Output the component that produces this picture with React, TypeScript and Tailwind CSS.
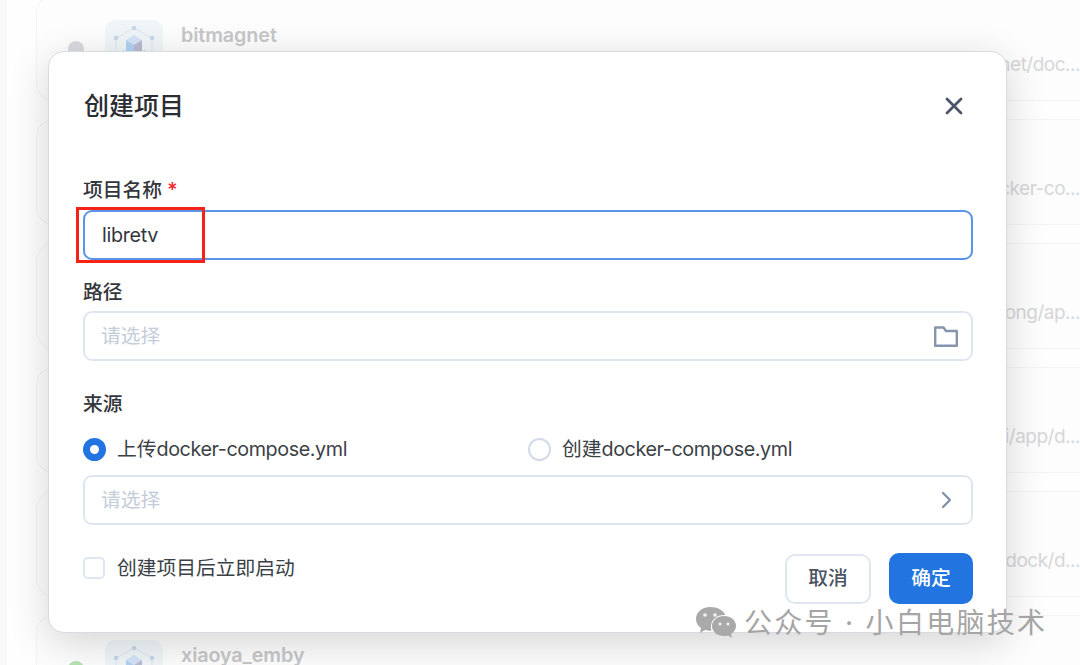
const cjk = "font-['Inter','Noto_Sans_CJK_SC',sans-serif]";

function Cube() {
  return (
    <div className="w-[58px] h-[58px] rounded-[10px] bg-[#f0f6f8] flex items-center justify-center shrink-0">
      <svg width="46" height="46" viewBox="0 0 46 46" fill="none">
        <path d="M23 2 L41 12 V33 L23 44 L5 33 V12 Z" stroke="#dbe4ee" strokeWidth="1" />
        <circle cx="23" cy="2" r="2.200" fill="#c6d7ea" />
        <circle cx="41" cy="12" r="2.200" fill="#c6d7ea" />
        <circle cx="5" cy="12" r="2.200" fill="#c6d7ea" />
        <path d="M23 9 L31 14 L23 19 L15 14 Z" fill="#d3e3f8" />
        <path d="M15 14 L23 19 V31 L15 26 Z" fill="#b3d0f2" />
        <path d="M31 14 L23 19 V31 L31 26 Z" fill="#b8bbd2" />
        <path d="M12 24 L23 31 L34 24 M12 24 V32 L23 38 L34 32 V24" stroke="#d5dce8" strokeWidth="1" />
      </svg>
    </div>
  );
}

const rows = [
  { name: "bitmagnet", path: "net/doc...", dot: "bg-[#d9dae0]" },
  { name: "", path: "cker-co...", dot: "bg-[#d9dae0]" },
  { name: "", path: "ong/ap...", dot: "bg-[#d9dae0]" },
  { name: "", path: "ei/app/d...", dot: "bg-[#d9dae0]" },
  { name: "", path: "dock/d...", dot: "bg-[#d9dae0]" },
  { name: "xiaoya_emby", path: "", dot: "bg-[#b5e3b0]" },
];

function Background() {
  return (
    <div className="pl-[36px] -mt-[5px] flex flex-col gap-[18px]">
      {rows.map((r, i) => (
        <div
          key={i}
          className="h-[106px] shrink-0 rounded-l-[18px] border border-r-0 border-[#f3f4f6] bg-[#fdfdfd] flex items-start"
        >
          <div className={`w-[16px] h-[16px] rounded-full shrink-0 ml-[31px] mt-[45px] ${r.dot}`} />
          <div className="ml-[21px] mt-[24px]">
            <Cube />
          </div>
          <div className="ml-[18px] mt-[26px] text-[19.75px] leading-[26px] font-semibold tracking-[-0.1px] text-[#c6c7c9]">{r.name}</div>
          <div className="ml-auto mt-[56px] text-[19px] leading-[26px] tracking-[-0.5px] text-[#d6d7da] whitespace-nowrap">{r.path}</div>
        </div>
      ))}
    </div>
  );
}

function Radio({ checked, prefix }: { checked?: boolean; prefix: string }) {
  return (
    <div className="flex items-center">
      {checked ? (
        <div className="w-[23px] h-[23px] rounded-full bg-[#2274e0] flex items-center justify-center">
          <div className="w-[9px] h-[9px] rounded-full bg-white" />
        </div>
      ) : (
        <div className="w-[23px] h-[23px] rounded-full border-2 border-[#d3dbe8] bg-white" />
      )}
      <span className="ml-[11px] text-[19.75px] leading-[26px] text-[#3b3f46]">
        {prefix}
        <span className="tracking-[-0.42px]">docker-compose.yml</span>
      </span>
    </div>
  );
}

function Field({ placeholder, icon, mt }: { placeholder: string; icon: React.ReactNode; mt: string }) {
  return (
    <div className={`h-[50px] rounded-[9px] border-2 border-[#dfe6f0] flex items-center pl-[16px] pr-[13px] ${mt}`}>
      <span className="text-[19.75px] leading-[26px] text-[#c3ccd9]">{placeholder}</span>
      <span className="ml-auto flex items-center">{icon}</span>
    </div>
  );
}

function Wechat() {
  return (
    <svg width="42" height="34" viewBox="0 0 42 34" fill="#a9a9a9">
      <path d="M15 1C7 1 1 6 1 13c0 4 2 7 5 9l-1 5 5-3c2 .6 3.500 .8 5 .8h1.500C16 23 16 22 16 20.500 16 13.500 22 9 29 9h1.200C28.500 4.500 22.500 1 15 1z" />
      <path d="M41 20c0-6-5.500-10-12-10s-12 4-12 10 5.500 10 12 10c1.300 0 2.800-.2 4-.6l4 2.600-1-4c3-2 5-4.500 5-8z" />
      <circle cx="10" cy="9" r="1.800" fill="#f2f2f2" />
      <circle cx="20" cy="9" r="1.800" fill="#f2f2f2" />
      <circle cx="25" cy="18" r="1.500" fill="#f2f2f2" />
      <circle cx="33" cy="18" r="1.500" fill="#f2f2f2" />
    </svg>
  );
}

export default function App() {
  return (
    <div className={`relative w-[1080px] h-[665px] overflow-hidden bg-[#fefefe] ${cjk}`}>
      <div className="absolute left-0 top-0 w-[7px] h-full bg-[#f8f9fb]" />
      <Background />

      <div className="absolute left-[48px] top-[51px] w-[959px] h-[582px] rounded-[16px] border border-[#d9dbdf] bg-white shadow-[0_10px_40px_rgba(0,0,0,0.16)] pl-[34px] pr-[33px]">
        <div className="flex items-center justify-between pt-[36px] h-[72px]">
          <h1 className="ml-[1px] text-[25px] leading-[36px] font-medium text-[#2a2d32]">创建项目</h1>
          <svg width="18" height="18" viewBox="0 0 18 18" className="mr-[10px]" fill="none" stroke="#4b5568" strokeWidth="2.800" strokeLinecap="round">
            <path d="M2 2 L16 16 M16 2 L2 16" />
          </svg>
        </div>

        <div className="mt-[53px] text-[19.75px] leading-[26px] font-medium text-[#33363b]">
          项目名称 <span className="text-[#f5222d]">*</span>
        </div>
        <div className="mt-[7px] h-[50px] rounded-[9px] border-2 border-[#5a93ea] flex items-center pl-[17px]">
          <span className="text-[19.75px] leading-[26px] tracking-[-0.3px] text-[#33363b]">libretv</span>
        </div>

        <div className="mt-[19px] text-[19.75px] leading-[26px] font-medium text-[#33363b]">路径</div>
        <Field
          mt="mt-[6px]"
          placeholder="请选择"
          icon={
            <svg width="24" height="21" viewBox="0 0 24 21" fill="none" stroke="#8695ae" strokeWidth="2.400" strokeLinejoin="round">
              <path d="M1.200 1.500h8.300l2.500 3.500h10.800v14.800H1.200z" />
            </svg>
          }
        />

        <div className="mt-[30px] text-[19.75px] leading-[26px] font-medium text-[#33363b]">来源</div>
        <div className="mt-[19px] flex items-center">
          <div className="w-[445px]">
            <Radio checked prefix="上传" />
          </div>
          <Radio prefix="创建" />
        </div>
        <Field
          mt="mt-[13px]"
          placeholder="请选择"
          icon={
            <svg width="12" height="18" viewBox="0 0 12 18" fill="none" stroke="#7f8ea8" strokeWidth="2.200" strokeLinecap="round" strokeLinejoin="round" className="mr-[6px]">
              <path d="M3 2 L10 9 L3 16" />
            </svg>
          }
        />

        <div className="mt-[28px] flex items-start">
          <div className="mt-[2px] flex items-center">
            <div className="w-[22px] h-[22px] rounded-[5px] border-2 border-[#dfe6f0]" />
            <span className="ml-[12px] text-[19.75px] leading-[26px] text-[#3b3f46]">创建项目后立即启动</span>
          </div>
          <div className="ml-auto flex gap-[18px]">
            <button className="mt-[1px] w-[86px] h-[50px] rounded-[10px] border-2 border-[#dfe6f0] text-[19.75px] font-medium text-[#4b5261]">取消</button>
            <button className="w-[84px] h-[51px] rounded-[10px] bg-[#2274e0] text-[19.75px] font-medium text-white">确定</button>
          </div>
        </div>
      </div>

      {/* annotation drawn over the screenshot */}
      <div className="absolute left-[76px] top-[207px] w-[129px] h-[56px] border-[3px] border-[#f52218]" />

      {/* watermark */}
      <div className="absolute left-[695px] top-[605px] flex items-center">
        <Wechat />
        <span className="ml-[7px] text-[28px] leading-[36px] tracking-[2.300px] whitespace-nowrap text-[#a5a5a5]">公众号 · 小白电脑技术</span>
      </div>
    </div>
  );
}
